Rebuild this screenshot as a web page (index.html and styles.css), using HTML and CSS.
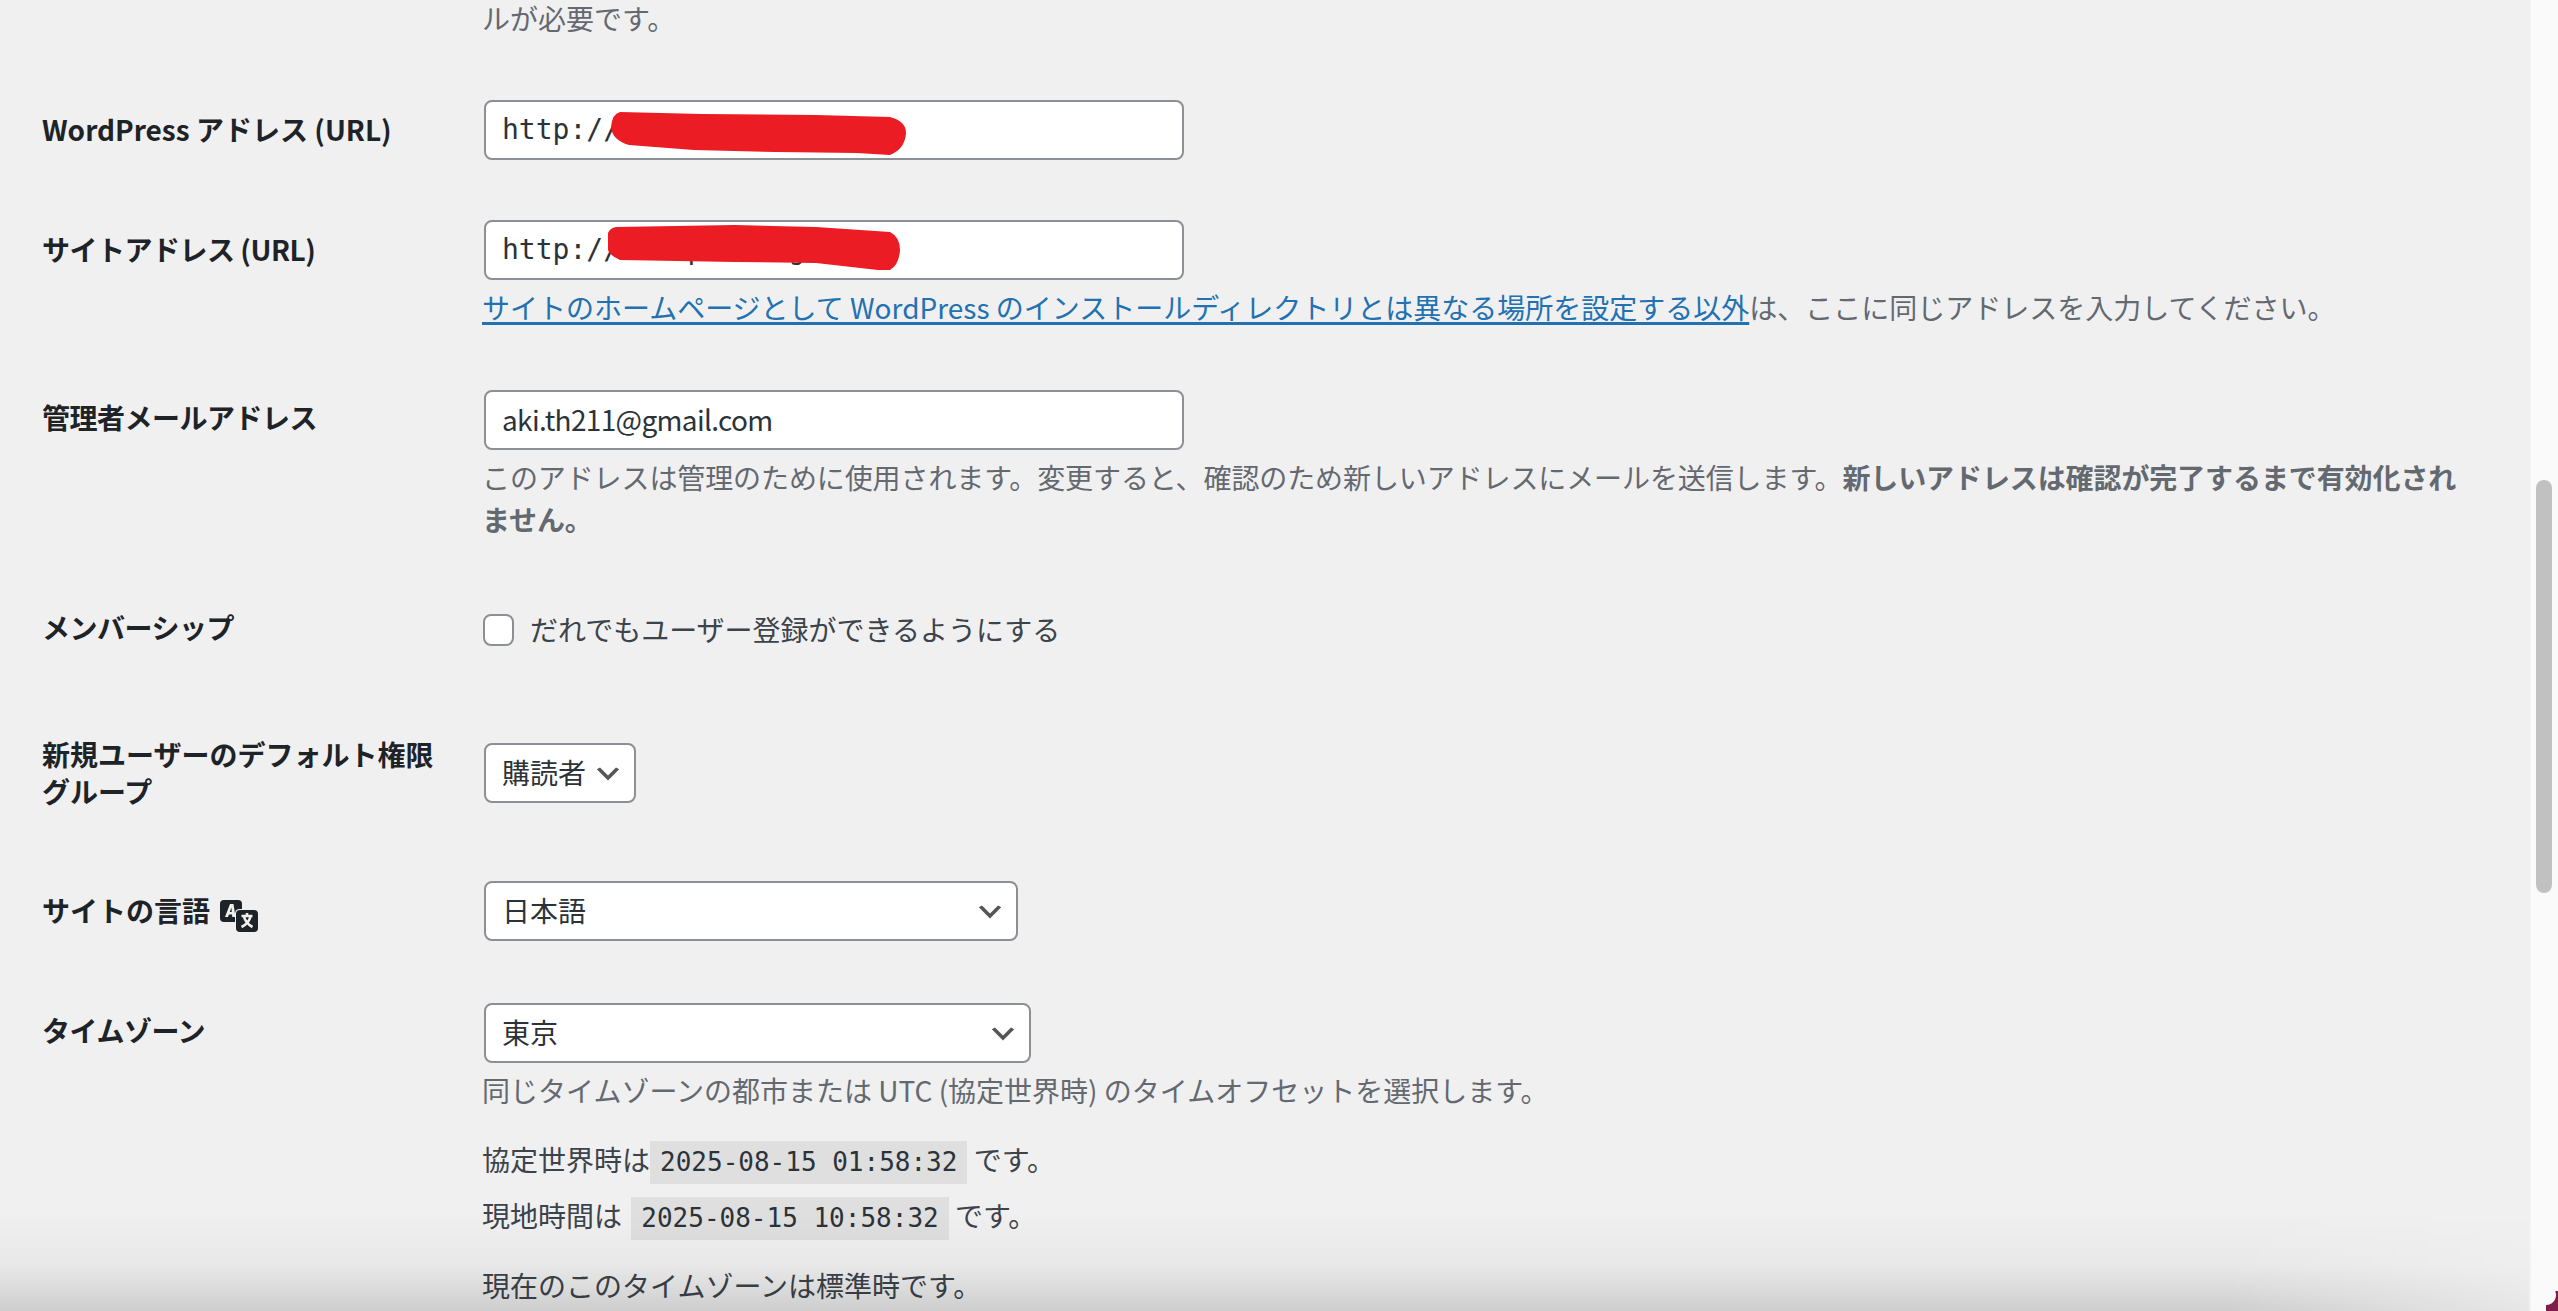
FILE: index.html
```html
<!DOCTYPE html>
<html lang="ja">
<head>
<meta charset="utf-8">
<title>一般設定</title>
<link rel="stylesheet" href="styles.css">
</head>
<body>
<main class="form">
  <div class="row row-top">
    <div class="label"></div>
    <div class="field"><p class="desc">ルが必要です。</p></div>
  </div>
  <div class="row">
    <label class="label">WordPress アドレス (URL)</label>
    <div class="field">
      <div class="url-wrap">
        <input class="text mono" type="text" value="http://example.org">
        <svg class="blob blob-a" viewBox="0 0 296 44"><path d="M10 1 92 3 206 4 280 6Q296 10 296 22 295 38 280 44L247 42 166 41 84 39 19 34Q2 29 1 16 2 3 10 1Z"/></svg>
      </div>
    </div>
  </div>
  <div class="row row-site">
    <label class="label label-tight">サイトアドレス (URL)</label>
    <div class="field">
      <div class="url-wrap">
        <input class="text mono" type="text" value="http://example.org">
        <svg class="blob blob-b" viewBox="0 0 292 46"><path d="M8 2 127 0 208 2 282 7Q292 12 292 25 291 40 282 45L270 45 208 38 127 37 12 35Q1 30 0 25L0 8Q2 3 8 2Z"/></svg>
      </div>
      <p class="desc desc-gap"><a class="link" href="#">サイトのホームページとして WordPress のインストールディレクトリとは異なる場所を設定する以外</a>は、ここに同じアドレスを入力してください。</p>
    </div>
  </div>
  <div class="row row-mail">
    <label class="label label-up label-tight">管理者メールアドレス</label>
    <div class="field">
      <input class="text text-mail" type="text" value="aki.th211@gmail.com">
      <p class="desc desc-gap desc-mail">このアドレスは管理のために使用されます。変更すると、確認のため新しいアドレスにメールを送信します。<strong>新しいアドレスは確認が完了するまで有効化され<br>ません。</strong></p>
    </div>
  </div>
  <div class="row row-member">
    <div class="label label-up label-tight">メンバーシップ</div>
    <label class="field check-line"><input class="check" type="checkbox">だれでもユーザー登録ができるようにする</label>
  </div>
  <div class="row row-role">
    <label class="label">新規ユーザーのデフォルト権限<br>グループ</label>
    <div class="field"><select class="select select-role"><option>購読者</option></select></div>
  </div>
  <div class="row">
    <label class="label label-icon">サイトの言語
      <svg class="lang-icon" viewBox="0 0 38 32" aria-hidden="true">
        <rect width="22" height="22" rx="4" fill="#1d2327"/>
        <path d="M5 17 10 4h3.5l2 13h-3.2l-.3-2.6H8.9L8 17ZM9.8 12h2l-.4-4.4Z" fill="#f0f0f1"/>
        <rect x="15" y="9" width="23" height="23" rx="4.5" fill="#f0f0f1"/>
        <rect x="16" y="10" width="22" height="22" rx="4" fill="#1d2327"/>
        <path d="M21.500 16h11M27 13v3M24 16.500c1 4.500 4 8 8.500 10.500M30.500 16.500c-1 4.500-4 8-9 10.500" fill="none" stroke="#f0f0f1" stroke-width="2.600"/>
      </svg>
    </label>
    <div class="field"><select class="select select-lang"><option>日本語</option></select></div>
  </div>
  <div class="row">
    <label class="label label-up label-tight">タイムゾーン</label>
    <div class="field">
      <select class="select select-zone"><option>東京</option></select>
      <p class="desc desc-gap">同じタイムゾーンの都市または UTC (協定世界時) のタイムオフセットを選択します。</p>
      <p class="time time-first">協定世界時は<code class="stamp">2025-08-15 01:58:32</code> です。</p>
      <p class="time">現地時間は <code class="stamp stamp-gap">2025-08-15 10:58:32</code> です。</p>
      <p class="desc desc-now">現在のこのタイムゾーンは標準時です。</p>
    </div>
  </div>
</main>
<aside class="scrollbar"><div class="thumb"></div></aside>
<div class="shade"></div>
<div class="corner"></div>
</body>
</html>
```
FILE: styles.css
```css
* { box-sizing: border-box; }
html, body { height: 100%; }
body {
  margin: 0;
  height: 1311px;
  overflow: hidden;
  display: flex;
  background: #f0f0f1;
  color: #2c3338;
  font-family: "Noto Sans CJK JP", "Noto Sans", sans-serif;
  font-size: 28px;
}
.form { flex: 1; padding-left: 42px; min-width: 0; }
.row { display: flex; }
.row-top { margin-top: -3px; }
.label {
  flex: 0 0 442px;
  padding: 41px 0;
  font-weight: 700;
  line-height: 37px;
  color: #1d2327;
}
.label-up { padding: 39px 0 43px; }
.label-tight { letter-spacing: -.5px; }
.label-icon { display: flex; align-items: flex-start; gap: 10px; }
.lang-icon { width: 38px; height: 32px; margin-top: 8px; flex: none; }
.field { flex: 1; padding: 30px 0; min-width: 0; }
.row-top .label { padding: 0; }
.row-top .field { padding: 0 0 31px; }
.row-site .field { padding-bottom: 32px; }
.row-mail .field { padding-bottom: 30px; }
.row-member .check-line {
  display: flex;
  align-items: center;
  gap: 16px;
  padding: 44px 0 50px;
  height: 125px;
  color: #3c434a;
  font-size: 28px;
  line-height: 31px;
}
.row-role { align-items: center; }
.desc {
  margin: 0 0 0 -2px;
  font-size: 28px;
  line-height: 42px;
  color: #646970;
}
.desc-gap { margin-top: 6px; }
.desc-mail { letter-spacing: -.1px; }
.desc-now { margin-top: 21px; color: #3c434a; }
.link { color: #2271b1; text-decoration: underline; text-decoration-thickness: 3px; text-underline-offset: 3px; }
.url-wrap { position: relative; width: 700px; }
.text {
  display: block;
  width: 700px;
  height: 60px;
  margin: 0;
  padding: 0 16px 2px;
  border: 2px solid #8c8f94;
  border-radius: 8px;
  background: #fff;
  color: #2c3338;
  font: 28px "Noto Sans CJK JP", "Noto Sans", sans-serif;
}
.text-mail { letter-spacing: -.65px; }
.mono { font-family: "DejaVu Sans Mono", monospace; letter-spacing: 0; }
.blob { position: absolute; fill: #ec1c24; }
.blob-a { left: 126px; top: 11px; width: 296px; height: 44px; }
.blob-b { left: 124px; top: 5px; width: 292px; height: 46px; }
.check {
  appearance: none;
  flex: none;
  width: 31px;
  height: 32px;
  margin: 0 0 0 -1px;
  border: 2px solid #8c8f94;
  border-radius: 8px;
  background: #fff;
}
.select {
  display: block;
  appearance: none;
  height: 60px;
  margin: 0;
  padding: 0 48px 2px 16px;
  border: 2px solid #8c8f94;
  border-radius: 8px;
  color: #2c3338;
  font: 28px "Noto Sans CJK JP", "Noto Sans", sans-serif;
  background: #fff url("data:image/svg+xml,%3Csvg xmlns='http://www.w3.org/2000/svg' width='20' height='20'%3E%3Cpath d='M5 6l5 5 5-5 2 1-7 7-7-7 2-1z' fill='%23555'/%3E%3C/svg%3E") no-repeat right 10px top 55% / 32px 32px;
}
.select-role { width: 152px; }
.select-lang { width: 534px; }
.select-zone { width: 547px; }
.time {
  margin: 0 0 0 -2px;
  font-size: 28px;
  line-height: 56px;
  color: #3c434a;
}
.time-first { margin-top: 20px; }
.stamp {
  display: inline-block;
  padding: 0 10px;
  height: 43px;
  line-height: 43px;
  background: rgba(0, 0, 0, .07);
  color: #2c3338;
  font-family: "DejaVu Sans Mono", monospace;
  font-size: 26px;
}
.stamp-gap { margin-left: 3px; }
.scrollbar {
  flex: 0 0 29px;
  height: 1311px;
  background: #fafafa;
  border-left: 2px solid #f2f2f2;
  padding: 480px 6px 0 5px;
}
.thumb { height: 413px; border-radius: 8px; background: #c1c1c1; }
.shade {
  position: fixed;
  left: 0;
  right: 29px;
  bottom: 0;
  height: 100px;
  pointer-events: none;
  background: linear-gradient(to bottom, rgba(0,0,0,0), rgba(0,0,0,.03) 55%, rgba(0,0,0,.14));
  mask-image: linear-gradient(to right, #000 88%, rgba(0,0,0,.25) 100%);
}
.corner {
  position: fixed;
  right: 0;
  bottom: 0;
  width: 12px;
  height: 20px;
  background: radial-gradient(circle at 0 4px, transparent 9.500px, #7e1f4b 10.500px);
}
```
